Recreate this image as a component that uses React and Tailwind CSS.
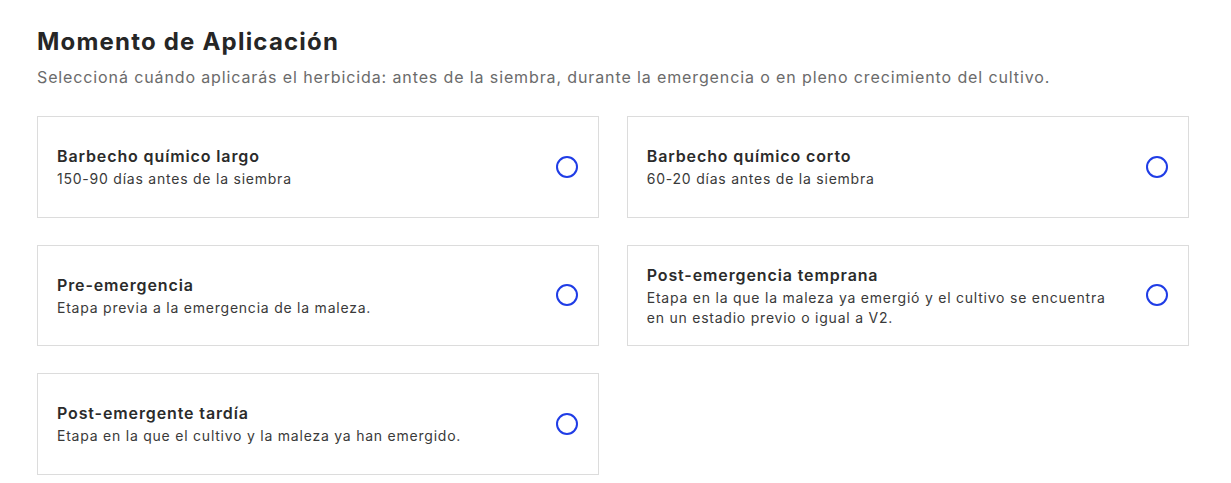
const options = [
  { title: 'Barbecho químico largo', desc: '150-90 días antes de la siembra' },
  { title: 'Barbecho químico corto', desc: '60-20 días antes de la siembra' },
  { title: 'Pre-emergencia', desc: 'Etapa previa a la emergencia de la maleza.' },
  {
    title: 'Post-emergencia temprana',
    desc: 'Etapa en la que la maleza ya emergió y el cultivo se encuentra en un estadio previo o igual a V2.',
  },
  { title: 'Post-emergente tardía', desc: 'Etapa en la que el cultivo y la maleza ya han emergido.' },
]

function OptionCard({ title, desc }) {
  return (
    <label className="flex h-[101.5px] cursor-pointer items-center justify-between border border-[#dcdcdc] bg-white pl-[19px] pr-[20px]">
      <div className="max-w-[475px]">
        <div className="text-base leading-6 font-semibold tracking-[0.055em] text-[#2b2b2b]">{title}</div>
        <div className="mt-px text-sm leading-5 tracking-[0.055em] text-[#3a3a3a]">{desc}</div>
      </div>
      <span className="h-[22px] w-[22px] shrink-0 rounded-full border-2 border-[#1f3ce6]" />
    </label>
  )
}

export default function App() {
  return (
    <div className="min-h-screen bg-white px-[37px] pt-[26px] font-['Inter','Noto_Sans',sans-serif]">
      <div className="w-[1152px]">
        <h1 className="text-2xl leading-8 font-bold tracking-[0.05em] text-[#262626]">Momento de Aplicación</h1>
        <p className="mt-[7px] text-base leading-6 tracking-[0.055em] text-[#6b6b6b]">
          Seleccioná cuándo aplicarás el herbicida: antes de la siembra, durante la emergencia o en pleno crecimiento del cultivo.
        </p>
        <div className="mt-[27px] grid grid-cols-2 gap-x-[27.5px] gap-y-[27px]">
          {options.map((o) => (
            <OptionCard key={o.title} {...o} />
          ))}
        </div>
      </div>
    </div>
  )
}
